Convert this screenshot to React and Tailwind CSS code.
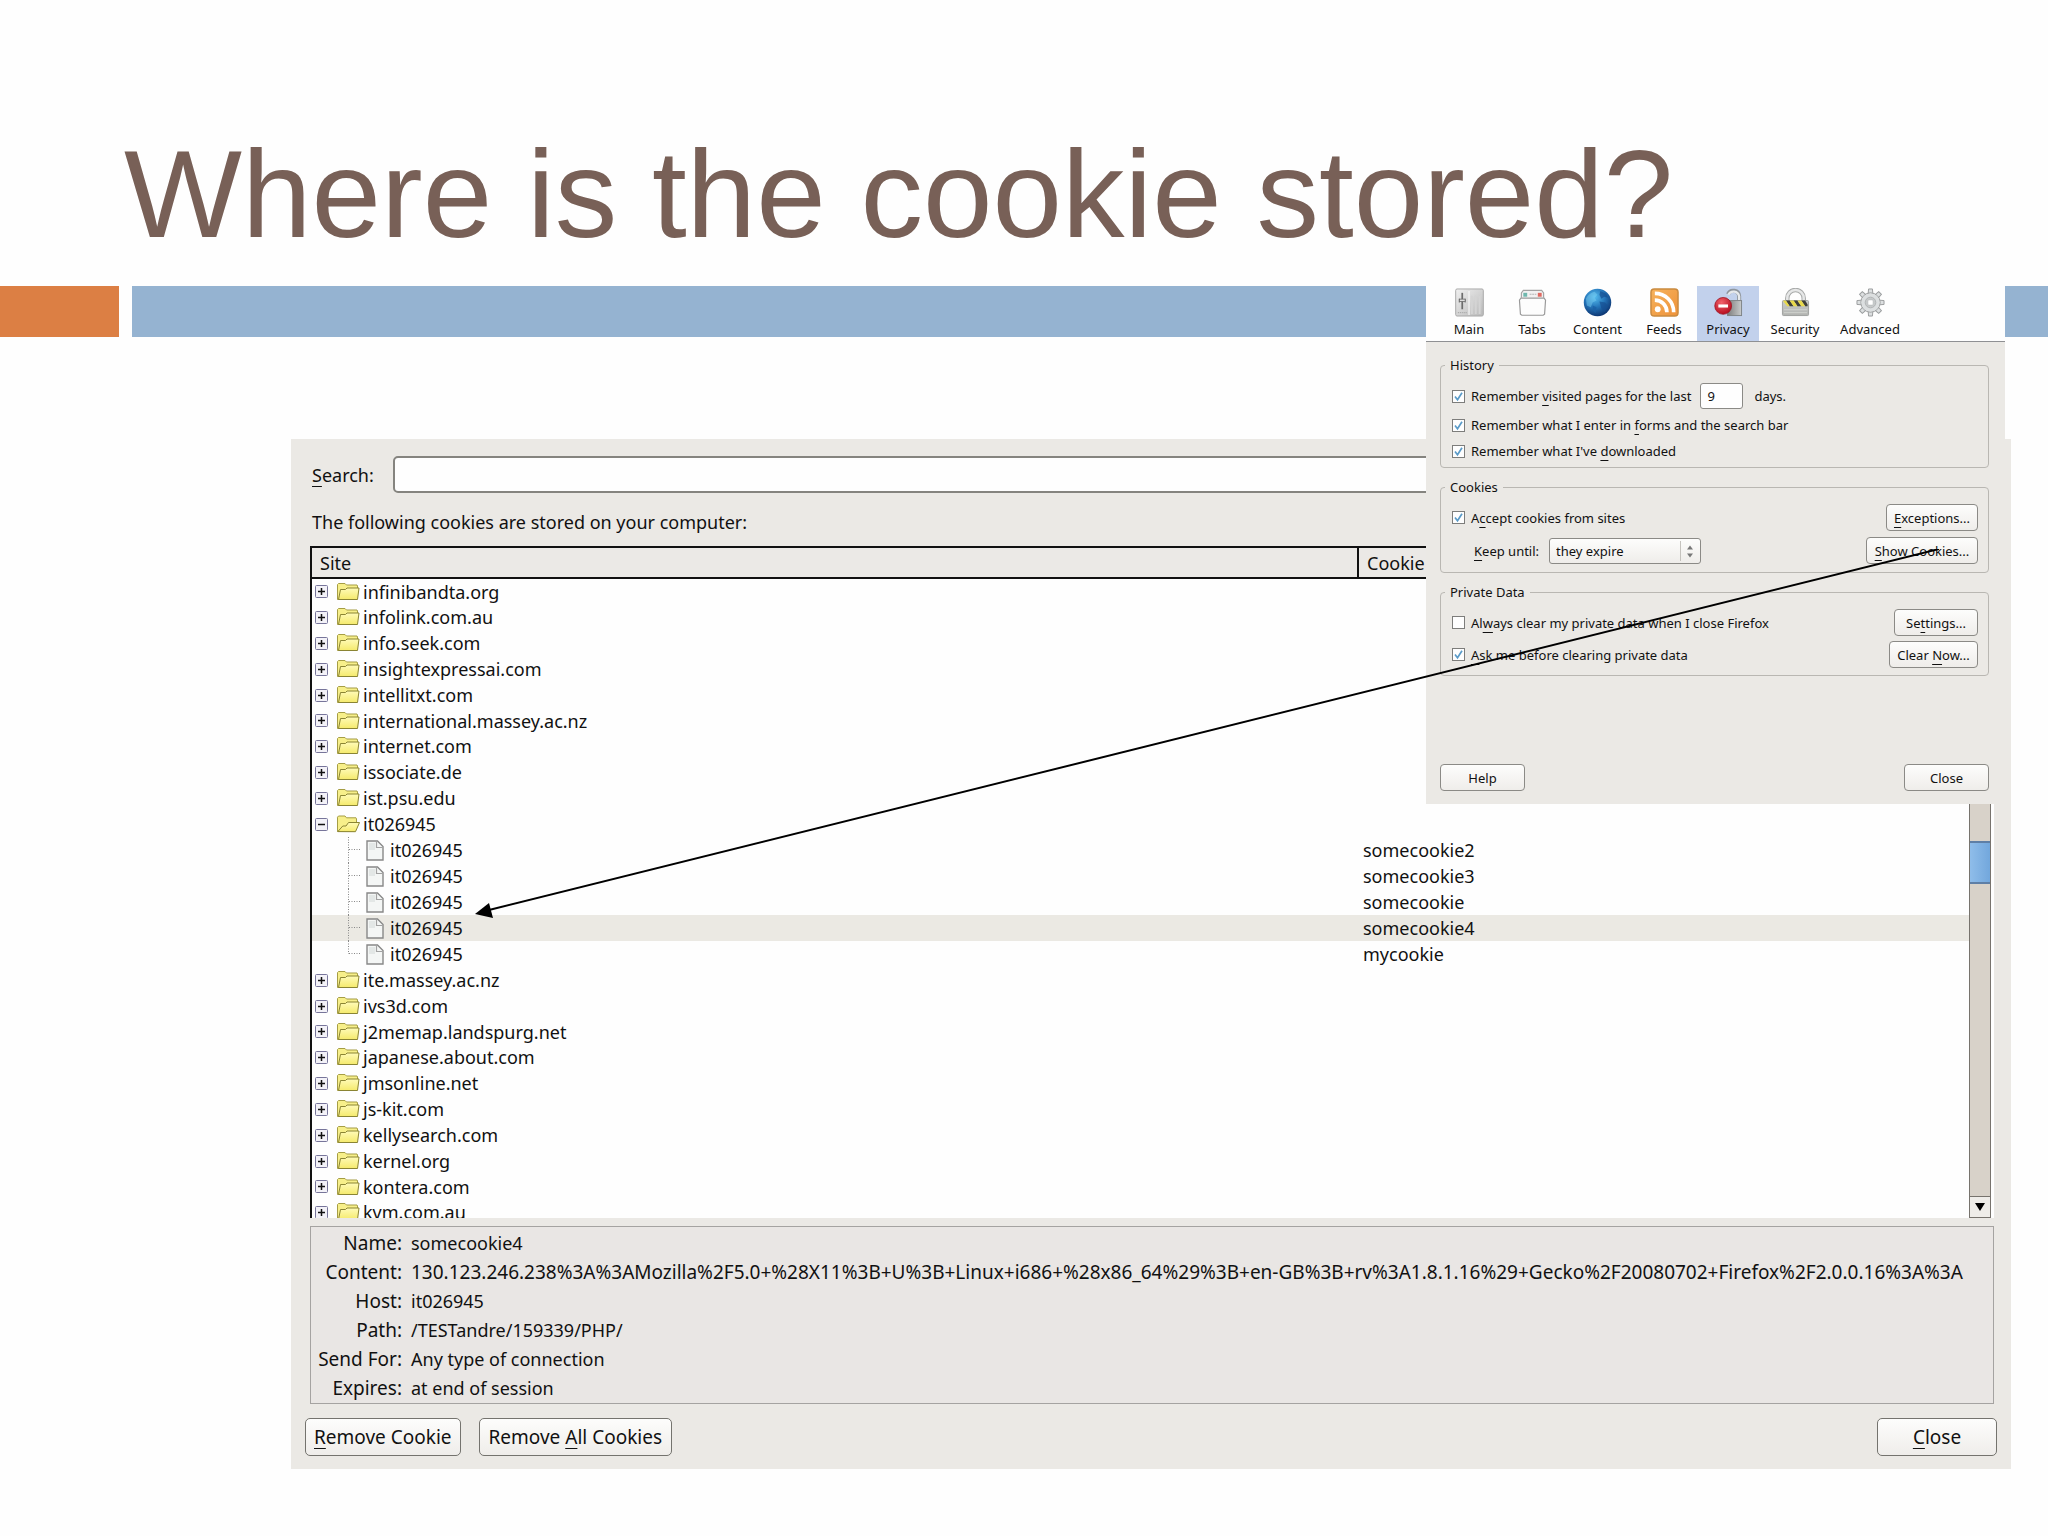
const SITES_BEFORE = [
  "infinibandta.org",
  "infolink.com.au",
  "info.seek.com",
  "insightexpressai.com",
  "intellitxt.com",
  "international.massey.ac.nz",
  "internet.com",
  "issociate.de",
  "ist.psu.edu",
];

const CHILDREN = ["somecookie2", "somecookie3", "somecookie", "somecookie4", "mycookie"];

const SITES_AFTER = [
  "ite.massey.ac.nz",
  "ivs3d.com",
  "j2memap.landspurg.net",
  "japanese.about.com",
  "jmsonline.net",
  "js-kit.com",
  "kellysearch.com",
  "kernel.org",
  "kontera.com",
  "kvm.com.au",
];

const ROWS = [
  ...SITES_BEFORE.map((site) => ({ kind: "closed", site, name: "" })),
  { kind: "open", site: "it026945", name: "" },
  ...CHILDREN.map((name, i) => ({
    kind: "child",
    site: "it026945",
    name,
    last: i === CHILDREN.length - 1,
    selected: name === "somecookie4",
  })),
  ...SITES_AFTER.map((site) => ({ kind: "closed", site, name: "" })),
];

const DETAILS = [
  ["Name:", "somecookie4"],
  [
    "Content:",
    "130.123.246.238%3A%3AMozilla%2F5.0+%28X11%3B+U%3B+Linux+i686+%28x86_64%29%3B+en-GB%3B+rv%3A1.8.1.16%29+Gecko%2F20080702+Firefox%2F2.0.0.16%3A%3A",
  ],
  ["Host:", "it026945"],
  ["Path:", "/TESTandre/159339/PHP/"],
  ["Send For:", "Any type of connection"],
  ["Expires:", "at end of session"],
];

function Key({ children }) {
  return <u className="underline decoration-1 underline-offset-4">{children}</u>;
}

function Expander({ open }) {
  return (
    <button type="button" aria-label={open ? "Collapse" : "Expand"} className="block size-[13px] shrink-0">
      <svg viewBox="0 0 13 13" className="size-[13px]" aria-hidden="true">
        <rect x="0.5" y="0.5" width="12" height="12" rx="1" fill="#f3f2f8" stroke="#77759a" />
        <path d="M3 6.5h7" stroke="#111" strokeWidth="1.5" />
        {!open && <path d="M6.5 3v7" stroke="#111" strokeWidth="1.5" />}
      </svg>
    </button>
  );
}

function FolderIcon({ open }) {
  return (
    <svg viewBox="0 0 24 20" className="h-5 w-6 shrink-0" aria-hidden="true">
      <defs>
        <linearGradient id="folder" x1="0" y1="0" x2="0" y2="1">
          <stop offset="0" stopColor="#fffbb8" />
          <stop offset="1" stopColor="#f5ea6c" />
        </linearGradient>
      </defs>
      {open ? (
        <>
          <path d="M1.500 17.500V3.200l1-1.200h6.500l1.500 1.800h9.500l.5 1V8l-2 9.500z" fill="#f7ef8a" stroke="#a59d45" />
          <path d="M1.800 17.600 6.800 12h3.200l2.500-3.500h11l-4 9.200z" fill="url(#folder)" stroke="#8a8433" />
        </>
      ) : (
        <>
          <path d="M1.500 17.500V2.500l1-1h6.500l1.500 1.500h10.500l.5 1v4l-2 9.500z" fill="#f7ef8a" stroke="#a59d45" />
          <path d="M2.500 17.500 4.500 7.500h5l1.500-1.500h12l-1.500 11.500z" fill="url(#folder)" stroke="#8a8433" />
        </>
      )}
    </svg>
  );
}

function PageIcon() {
  return (
    <svg viewBox="0 0 18 21" className="h-[21px] w-[18px] shrink-0" aria-hidden="true">
      <path d="M1 1h10.500L17 6.500V20H1z" fill="#f4f6f5" stroke="#888" strokeWidth="1.400" />
      <path d="M3 3h6v7H3z" fill="#e3e7e6" />
      <path d="M10.500 1.500v6h6" fill="none" stroke="#a2a2a2" strokeWidth="1.200" />
    </svg>
  );
}

function Branch({ last }) {
  return (
    <svg viewBox="0 0 14 26" className="h-[26px] w-[14px] shrink-0" aria-hidden="true">
      <path d={last ? "M1.500 0v13" : "M1.500 0v26"} stroke="#888" strokeDasharray="1 1.500" />
      <path d="M2 12.500h11" stroke="#888" strokeDasharray="1 1.500" />
    </svg>
  );
}

function CookieRow({ row }) {
  return (
    <tr className={`h-[26px] nth-[6n]:h-[25px] ${row.selected ? "bg-[#ebe9e3]" : ""}`}>
      <td className="p-0">
        {row.kind === "child" ? (
          <div className="flex h-[25px] items-center pl-[35px]">
            <Branch last={row.last} />
            <span className="w-[5px]" />
            <PageIcon />
            <span className="pt-px pl-[6px]">{row.site}</span>
          </div>
        ) : (
          <div className="flex h-[25px] items-center pl-[3px]">
            <Expander open={row.kind === "open"} />
            <span className="w-2" />
            <FolderIcon open={row.kind === "open"} />
            <span className="pt-px pl-[3px]">{row.site}</span>
          </div>
        )}
      </td>
      <td className="p-0 pt-px pl-[5px]">{row.name}</td>
    </tr>
  );
}

function BigButton({ children, className }) {
  return (
    <button
      type="button"
      className={`h-[38px] rounded-[5px] border border-[#74736e] bg-linear-to-b from-[#fdfdfc] to-[#efedea] text-[19px] whitespace-nowrap ${className}`}
    >
      {children}
    </button>
  );
}

function CookiesDialog() {
  return (
    <section
      aria-label="Cookies"
      className="mt-[101px] mr-[37px] ml-[291px] bg-[#ebe9e5] pt-[17px] pb-[13px] text-[18px] leading-[26px] text-[#111]"
    >
      <div className="pr-[17px] pl-[19px]">
        <div className="flex items-center pl-[2px]">
          <label htmlFor="search" className="w-[81px]">
            <Key>S</Key>earch:
          </label>
          <input
            id="search"
            type="text"
            className="h-[37px] flex-1 rounded-[5px] border-2 border-[#85847f] bg-[#fefefe] px-2"
          />
        </div>
        <p className="mt-4 pl-[2px]">The following cookies are stored on your computer:</p>

        <div className="mt-[11px] flex h-[672px] overflow-hidden border-t-2 border-l-2 border-[#111] bg-[#fefefe]">
          <table className="w-full table-fixed border-collapse self-start leading-[25px]">
            <colgroup>
              <col className="w-[1046px]" />
              <col />
            </colgroup>
            <thead>
              <tr className="h-[30px] border-b-2 border-[#111] bg-[#ebe9e6] text-left">
                <th className="border-r-2 border-[#111] p-0 pt-[2px] pl-2 font-normal">Site</th>
                <th className="p-0 pt-[2px] pl-2 font-normal">Cookie Name</th>
              </tr>
            </thead>
            <tbody>
              {ROWS.map((row, i) => (
                <CookieRow key={i} row={row} />
              ))}
            </tbody>
          </table>
          <div className="mr-[3px] flex w-[22px] shrink-0 flex-col border-x border-[#77736d] bg-[#d8d2c9]">
            <div className="h-[293px]" />
            <div className="h-[43px] border-y-2 border-[#5e7fa6] bg-linear-to-r from-[#8fbdea] to-[#72a7dc]" />
            <div className="flex-1" />
            <button
              type="button"
              aria-label="Scroll down"
              className="grid h-[22px] place-items-center border-y border-[#77736d] bg-[#efede9]"
            >
              <svg viewBox="0 0 10 8" className="h-2 w-[10px]" aria-hidden="true">
                <path d="M0 0h10L5 8z" fill="#000" />
              </svg>
            </button>
          </div>
        </div>

        <dl className="mt-2 grid grid-cols-[91px_1fr] gap-x-[9px] overflow-hidden border border-[#a5a3a1] bg-[#e9e6e4] pt-[2px] leading-[29px]">
          {DETAILS.map(([label, value]) => (
            <div key={label} className="contents">
              <dt className="text-right text-[19px] whitespace-nowrap">{label}</dt>
              <dd className={`whitespace-nowrap ${label === "Content:" ? "text-[19px]" : ""}`}>{value}</dd>
            </div>
          ))}
        </dl>
      </div>

      <div className="mt-[14px] flex gap-[18px] px-[14px]">
        <BigButton className="px-2">
          <Key>R</Key>emove Cookie
        </BigButton>
        <BigButton className="px-[9px]">
          Remove <Key>A</Key>ll Cookies
        </BigButton>
        <BigButton className="ml-auto w-[120px]">
          <Key>C</Key>lose
        </BigButton>
      </div>
    </section>
  );
}

function MainIcon() {
  return (
    <svg viewBox="0 0 30 30" className="size-[29px]" aria-hidden="true">
      <defs>
        <linearGradient id="main" x1="0" y1="0" x2="1" y2="1">
          <stop offset="0" stopColor="#f0f0f0" />
          <stop offset="1" stopColor="#b9b9b9" />
        </linearGradient>
      </defs>
      <rect x="0.700" y="1" width="28.600" height="28" rx="1.500" fill="url(#main)" stroke="#a8a8a8" />
      <path d="M14.500 3v25" stroke="#f8f8f8" strokeWidth="1.200" />
      <path d="M17.500 8v19M21.500 8v19M25.500 8v19" stroke="#d4d4d4" strokeWidth="2" />
      <path d="M7.500 5v17" stroke="#6c6c6c" strokeWidth="1.800" />
      <path d="M4.500 11v4M10.500 11v4" stroke="#777" strokeWidth="1.200" />
      <rect x="4.500" y="11.500" width="6" height="2.500" fill="#ddd" stroke="#666" strokeWidth="0.800" />
      <path d="M3 25.500h9" stroke="#999" strokeDasharray="1 1" />
    </svg>
  );
}

function TabsIcon() {
  return (
    <svg viewBox="0 0 30 30" className="size-[29px]" aria-hidden="true">
      <path d="M3.500 10V5l2-2.500h19l2 2.500v5" fill="#f1f1f1" stroke="#a3a3a3" strokeWidth="1.200" />
      <rect x="5.500" y="5" width="4" height="4" fill="#6fb8ae" />
      <path d="M12 6.500h7" stroke="#b5b5b5" strokeWidth="1.200" strokeDasharray="2 0.700" />
      <rect x="20.500" y="5" width="4" height="4" fill="#e06a62" />
      <path d="M1.500 12.500 3 10.500h24l1.500 2-1 14.500-1.500 1.200H4L2.500 27z" fill="#fdfdfd" stroke="#999" strokeWidth="1.200" />
    </svg>
  );
}

function ContentIcon() {
  return (
    <svg viewBox="0 0 30 30" className="size-[29px]" aria-hidden="true">
      <defs>
        <radialGradient id="globe" cx="0.400" cy="0.300" r="0.750">
          <stop offset="0" stopColor="#55bdf0" />
          <stop offset="0.500" stopColor="#2474b8" />
          <stop offset="1" stopColor="#0b2f6b" />
        </radialGradient>
      </defs>
      <circle cx="15" cy="15" r="14.200" fill="url(#globe)" />
      <path d="M3 11c3-5 6-6 9-7l3 3-3 3 2 3-4 2-2 5-4-2z" fill="#7fd0f2" opacity="0.450" />
      <path d="M18 3l6 3 2 4-4-1-3 2-2-4zM17 14l6 1 3 4-4 6-3-4z" fill="#154f91" opacity="0.700" />
      <path d="M10 18l4 2-1 6-3-3z" fill="#1a5fa5" opacity="0.800" />
    </svg>
  );
}

function FeedsIcon() {
  return (
    <svg viewBox="0 0 30 30" className="size-[29px]" aria-hidden="true">
      <defs>
        <linearGradient id="feed" x1="0" y1="0" x2="1" y2="1">
          <stop offset="0" stopColor="#f6b25c" />
          <stop offset="1" stopColor="#ee9239" />
        </linearGradient>
      </defs>
      <rect x="1" y="1" width="28" height="28" rx="3.500" fill="url(#feed)" stroke="#c98a3f" strokeWidth="1.500" />
      <circle cx="8" cy="22" r="3" fill="#fff" />
      <path d="M5 12.500c7 0 12.500 5.500 12.500 12.500M5 5.500C16 5.500 24.500 14 24.500 25" fill="none" stroke="#fff" strokeWidth="3.800" />
    </svg>
  );
}

function PrivacyIcon() {
  return (
    <svg viewBox="0 0 30 30" className="size-[29px]" aria-hidden="true">
      <defs>
        <linearGradient id="privacyLock" x1="0" y1="0" x2="1" y2="0">
          <stop offset="0" stopColor="#7d7d7d" />
          <stop offset="1" stopColor="#c9cccc" />
        </linearGradient>
        <radialGradient id="privacyStop" cx="0.400" cy="0.300" r="0.700">
          <stop offset="0" stopColor="#f1616a" />
          <stop offset="1" stopColor="#b80e20" />
        </radialGradient>
      </defs>
      <path d="M26 13V8.500a6 6 0 0 0-11.500-2" fill="none" stroke="#8e959c" strokeWidth="4.200" />
      <path d="M26 13V8.500a6 6 0 0 0-11.200-1.500" fill="none" stroke="#e6e9ec" strokeWidth="2.400" />
      <rect x="14" y="13" width="14.500" height="15.500" fill="url(#privacyLock)" stroke="#7f8486" />
      <circle cx="9.500" cy="18.500" r="8.700" fill="url(#privacyStop)" stroke="#9b1420" strokeWidth="0.800" />
      <rect x="4.500" y="17" width="10" height="3.200" fill="#fff" />
    </svg>
  );
}

function SecurityIcon() {
  return (
    <svg viewBox="0 0 30 30" className="size-[29px]" aria-hidden="true">
      <defs>
        <linearGradient id="lock" x1="0" y1="0" x2="0" y2="1">
          <stop offset="0" stopColor="#c9cbc9" />
          <stop offset="1" stopColor="#b2b4b1" />
        </linearGradient>
      </defs>
      <path d="M6.500 15v-4.500a8.500 8.500 0 0 1 17 0V15" fill="none" stroke="#a8aaa9" strokeWidth="4.600" />
      <path d="M6.500 15v-4.500a8.500 8.500 0 0 1 17 0V15" fill="none" stroke="#e6e7e7" strokeWidth="2.600" />
      <rect x="1.500" y="13" width="27" height="15.500" rx="1" fill="url(#lock)" stroke="#9fa19f" />
      <path d="M5 13h4l4 6H9zM13 13h4l4 6h-4zM21 13h4l2.500 4v2H25z" fill="#3f3f38" />
      <path d="M9 13h4l4 6h-4zM17 13h4l4 6h-4z" fill="#e8d94a" />
      <path d="M2.500 13H5l4 6H6.500l-4-5z" fill="#e8d94a" />
      <path d="M3 22.500h24M3 25.500h24" stroke="#d0d2cf" />
    </svg>
  );
}

function AdvancedIcon() {
  return (
    <svg viewBox="0 0 30 30" className="size-[29px]" aria-hidden="true">
      <g fill="#dcdfe0" stroke="#9a9d9e" strokeWidth="1">
        {[0, 45, 90, 135, 180, 225, 270, 315].map((a) => (
          <path key={a} transform={`rotate(${a} 15 15)`} d="M12.500 7 13 1h4L17.500 7z" />
        ))}
        <circle cx="15" cy="15" r="10" />
      </g>
      <circle cx="15" cy="15" r="9.400" fill="#dcdfe0" />
      <circle cx="15" cy="15" r="5.500" fill="#c6c9ca" stroke="#b0b3b4" />
      <rect x="12.300" y="12.300" width="5.400" height="5.400" rx="1" fill="#fff" stroke="#b5b8b9" strokeWidth="0.600" />
    </svg>
  );
}

const TABS = [
  { label: "Main", Icon: MainIcon, width: "w-[62px]" },
  { label: "Tabs", Icon: TabsIcon, width: "w-[64px]" },
  { label: "Content", Icon: ContentIcon, width: "w-[67px]" },
  { label: "Feeds", Icon: FeedsIcon, width: "w-[66px]" },
  { label: "Privacy", Icon: PrivacyIcon, width: "w-[62px]" },
  { label: "Security", Icon: SecurityIcon, width: "w-[72px]" },
  { label: "Advanced", Icon: AdvancedIcon, width: "w-[78px]" },
];

function Check({ children, checked }) {
  return (
    <label className="flex h-5 items-center gap-[6px] whitespace-nowrap">
      <span className="grid size-[13px] shrink-0">
        <input
          type="checkbox"
          defaultChecked={checked}
          className="peer col-start-1 row-start-1 size-[13px] appearance-none border border-[#7d7d7b] bg-[#fefefe]"
        />
        <svg
          viewBox="0 0 13 13"
          className="pointer-events-none invisible col-start-1 row-start-1 size-[13px] peer-checked:visible"
          aria-hidden="true"
        >
          <path d="M3 6.500l2.500 3.200L10 2.800" fill="none" stroke="#5b9bc8" strokeWidth="1.700" />
        </svg>
      </span>
      <span>{children}</span>
    </label>
  );
}

function SmallButton({ children, className }) {
  return (
    <button
      type="button"
      className={`h-[27px] rounded-[4px] border border-[#8b8a86] bg-linear-to-b from-[#fdfdfc] to-[#efedea] whitespace-nowrap ${className}`}
    >
      {children}
    </button>
  );
}

function Group({ title, children, className }) {
  return (
    <fieldset className={`min-w-0 rounded-[4px] border border-[#b9b7b2] pr-[10px] pl-[11px] ${className}`}>
      <legend className="-ml-[7px] px-[5px] leading-[18px]">{title}</legend>
      <div className="flex flex-col">{children}</div>
    </fieldset>
  );
}

function PreferencesWindow() {
  return (
    <section
      aria-label="Preferences"
      className="absolute top-[286px] right-[43px] w-[579px] bg-[#ebe9e5] text-[13px] leading-[18px] text-[#111]"
    >
      <nav className="flex h-[56px] border-b border-[#8f9093] bg-[#fefefe] pl-3">
        {TABS.map(({ label, Icon, width }) => (
          <button
            key={label}
            type="button"
            className={`flex flex-col items-center pt-[2px] ${width} ${label === "Privacy" ? "bg-[#c2d1ec]" : ""}`}
          >
            <Icon />
            <span className="mt-[3px]">{label}</span>
          </button>
        ))}
      </nav>

      <div className="flex flex-col gap-[10px] pt-[14px] pr-4 pl-[14px]">
        <Group title="History" className="pt-[9px] pb-[6px]">
          <div className="flex h-[26px] items-center">
            <Check checked>
              Remember <Key>v</Key>isited pages for the last
            </Check>
            <input
              type="text"
              aria-label="Days to remember visited pages"
              defaultValue="9"
              className="ml-[9px] h-[26px] w-[43px] rounded-[3px] border border-[#8b8a86] bg-[#fefefe] px-[6px]"
            />
            <span className="ml-[11px]">days.</span>
          </div>
          <div className="mt-[6px] flex flex-col gap-[6px]">
            <Check checked>
              Remember what I enter in <Key>f</Key>orms and the search bar
            </Check>
            <Check checked>
              Remember what I've <Key>d</Key>ownloaded
            </Check>
          </div>
        </Group>

        <Group title="Cookies" className="pt-2 pb-[8px]">
          <div className="flex items-center justify-between">
            <Check checked>
              A<Key>c</Key>cept cookies from sites
            </Check>
            <SmallButton className="w-[92px]">
              <Key>E</Key>xceptions...
            </SmallButton>
          </div>
          <div className="mt-[6px] flex items-center pl-[22px]">
            <label htmlFor="keep">
              <Key>K</Key>eep until:
            </label>
            <span className="ml-[10px] grid w-[152px] items-center">
              <select
                id="keep"
                className="col-start-1 row-start-1 h-[26px] appearance-none rounded-[3px] border border-[#8b8a86] bg-linear-to-b from-[#fdfdfc] to-[#efedea] px-[6px]"
              >
                <option>they expire</option>
              </select>
              <svg
                viewBox="0 0 20 20"
                className="pointer-events-none col-start-1 row-start-1 mr-px size-5 justify-self-end"
                aria-hidden="true"
              >
                <path d="M0.500 0v20" stroke="#c5c3be" />
                <path d="M7 8.500 10 4.500l3 4zM7 12.500l3 4 3-4z" fill="#777" />
              </svg>
            </span>
            <SmallButton className="ml-auto w-[112px]">
              <Key>S</Key>how Cookies...
            </SmallButton>
          </div>
        </Group>

        <Group title="Private Data" className="pt-2 pb-[7px]">
          <div className="flex items-center justify-between">
            <Check>
              Al<Key>w</Key>ays clear my private data when I close Firefox
            </Check>
            <SmallButton className="w-[84px]">
              Se<Key>t</Key>tings...
            </SmallButton>
          </div>
          <div className="mt-[5px] flex items-center justify-between">
            <Check checked>
              <Key>A</Key>sk me before clearing private data
            </Check>
            <SmallButton className="w-[89px]">
              Clear <Key>N</Key>ow...
            </SmallButton>
          </div>
        </Group>
      </div>

      <div className="mt-[88px] flex justify-between pr-4 pb-[13px] pl-[14px]">
        <SmallButton className="w-[85px]">Help</SmallButton>
        <SmallButton className="w-[85px]">Close</SmallButton>
      </div>
    </section>
  );
}

function Arrow() {
  return (
    <svg
      viewBox="0 0 1464 370"
      className="pointer-events-none absolute top-[549px] right-[109px] h-[370px] w-[1464px]"
      aria-hidden="true"
    >
      <path d="M1464 0 14 361" stroke="#000" strokeWidth="2" />
      <path d="M0 365 14 354 18 369z" fill="#000" />
    </svg>
  );
}

export default function App() {
  return (
    <main className="relative min-h-screen overflow-hidden bg-[#fefefe] font-['Noto_Sans',sans-serif]">
      <h1 className="pt-[131px] pl-[124px] font-['Liberation_Sans',sans-serif] text-[125px] leading-[125px] whitespace-nowrap text-[#786057]">
        Where is the cookie stored?
      </h1>
      <div className="mt-[30px] mb-[102px] flex h-[51px] gap-[13px]">
        <div className="w-[119px] bg-[#dc7f44]" />
        <div className="flex-1 bg-[#95b3d1]" />
      </div>
      <CookiesDialog />
      <PreferencesWindow />
      <Arrow />
    </main>
  );
}
